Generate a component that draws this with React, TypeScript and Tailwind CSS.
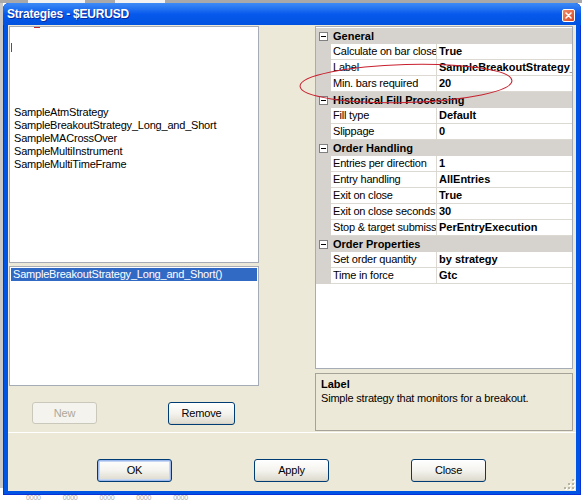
import React from "react";

type Row = [string, string];
type Section = { title: string; rows: Row[] };

const sections: Section[] = [
  {
    title: "General",
    rows: [
      ["Calculate on bar close", "True"],
      ["Label", "SampleBreakoutStrategy_Long_and_Short"],
      ["Min. bars required", "20"],
    ],
  },
  {
    title: "Historical Fill Processing",
    rows: [
      ["Fill type", "Default"],
      ["Slippage", "0"],
    ],
  },
  {
    title: "Order Handling",
    rows: [
      ["Entries per direction", "1"],
      ["Entry handling", "AllEntries"],
      ["Exit on close", "True"],
      ["Exit on close seconds", "30"],
      ["Stop & target submission", "PerEntryExecution"],
    ],
  },
  {
    title: "Order Properties",
    rows: [
      ["Set order quantity", "by strategy"],
      ["Time in force", "Gtc"],
    ],
  },
];

const strategies = [
  "SampleAtmStrategy",
  "SampleBreakoutStrategy_Long_and_Short",
  "SampleMACrossOver",
  "SampleMultiInstrument",
  "SampleMultiTimeFrame",
];

const MinusBox = () => (
  <div className="w-[9px] h-[9px] border border-[#808080] bg-white flex items-center justify-center">
    <div className="w-[5px] h-px bg-black" />
  </div>
);

const XpButton = ({ label, w, disabled, isDefault }: { label: string; w: string; disabled?: boolean; isDefault?: boolean }) => {
  if (disabled) {
    return (
      <div className={`${w} h-[22px] rounded-[3px] border border-[#CAC8BB] bg-[#F4F3EE] flex items-center justify-center text-[#ACA899]`}>
        {label}
      </div>
    );
  }
  return (
    <div className={`${w} h-[23px] rounded-[3px] border border-[#003C74] bg-linear-to-b from-white via-[#F4F3EE] to-[#DCD9CC] flex items-center justify-center text-black ${isDefault ? "shadow-[inset_0_0_0_1px_#9DB9EB,inset_0_0_0_2px_#C6D6F3]" : "shadow-[inset_0_-1px_0_#D6D0C5]"}`}>
      {label}
    </div>
  );
};

export default function App() {
  return (
    <div className="relative w-[582px] h-[500px] overflow-hidden bg-white font-['Liberation_Sans',Arial,sans-serif] text-[11px] tracking-[-0.2px] text-black">
      {/* desktop behind */}
      <div className="h-[3px] bg-[#A9A9A9] flex">
        <div className="ml-[28px] w-[57px] bg-[#F2F2F2]" />
        <div className="ml-[30px] w-[50px] bg-[#F2F2F2]" />
      </div>
      <div className="absolute left-0 top-[3px] w-[3px] h-[485px] bg-[#C8C8C8]" />
      <div className="absolute left-0 top-[496px] flex gap-[22px] pl-[26px] text-[7px] leading-[4px] text-[#A8A8A8]">
        <span>0000</span>
        <span>0000</span>
        <span>0000</span>
        <span>0000</span>
        <span>0000</span>
      </div>

      {/* window */}
      <div className="absolute left-[3px] top-[3px] w-[578px] h-[492px] rounded-t-[6px] bg-[#0054E3] shadow-[inset_0_0_0_1px_#0831D9]">
        <div className="h-[22px] rounded-t-[6px] bg-linear-to-b from-[#3D8BF6] via-[#0659EC] to-[#0152DF] flex items-center justify-between pl-[4px] pr-[6px]">
          <span className="text-white font-bold text-[12px] tracking-[-0.2px] [text-shadow:1px_1px_#0A2A9C]">Strategies - $EURUSD</span>
          <div className="mt-[2px] w-[13px] h-[13px] rounded-[2px] border border-white bg-linear-to-br from-[#F08A66] to-[#D9451E] flex items-center justify-center">
            <svg width="7" height="7" viewBox="0 0 7 7">
              <path d="M1 1 L6 6 M6 1 L1 6" stroke="white" strokeWidth="1.6" strokeLinecap="round" />
            </svg>
          </div>
        </div>

        <div className="ml-[5px] w-[568px] h-[466px] bg-[#ECE9D8] relative">
          <div className="h-[407px] flex">
            {/* left column */}
            <div className="ml-[1px] w-[250px] flex flex-col">
              <div className="relative h-[237px] mt-[1px] border border-[#A5ACB5] bg-white pt-[79px] pl-[4px] leading-[13px]">
                <span className="absolute left-[24px] top-0 w-[6px] h-px bg-[#C0262C]" />
                <span className="absolute left-[1px] top-[16px] w-px h-[9px] bg-[#C0262C]" />
                {strategies.map((s) => (
                  <div key={s} className="whitespace-nowrap">{s}</div>
                ))}
              </div>
              <div className="h-[120px] mt-[3px] border border-[#A5ACB5] bg-white px-[1px] pt-px">
                <div className="h-[13px] leading-[13px] bg-[#316AC5] text-white pl-[2px] whitespace-nowrap">
                  SampleBreakoutStrategy_Long_and_Short()
                </div>
              </div>
              <div className="mt-[16px] flex">
                <div className="ml-[23px]">
                  <XpButton label="New" w="w-[65px]" disabled />
                </div>
                <div className="ml-[71px]">
                  <XpButton label="Remove" w="w-[67px]" />
                </div>
              </div>
            </div>

            {/* right column */}
            <div className="ml-[56px] w-[258px] flex flex-col">
              <div className="h-[343px] mt-[1px] border border-[#A5ACB5] bg-white pt-px">
                {sections.map((sec) => (
                  <div key={sec.title}>
                    <div className="h-[16px] bg-[#D6D3CE] flex items-center">
                      <div className="ml-[3px]">
                        <MinusBox />
                      </div>
                      <span className="ml-[5px] font-bold tracking-[0px] leading-[16px] whitespace-nowrap">{sec.title}</span>
                    </div>
                    {sec.rows.map(([name, value]) => (
                      <div key={name} className="h-[16px] flex">
                        <div className="w-[15px] bg-[#D6D3CE]" />
                        <div className="w-[105px] border-b border-[#DCD9D2] pl-[2px] leading-[15px] whitespace-nowrap overflow-hidden">
                          {name}
                        </div>
                        <div className="w-px bg-[#DCD9D2]" />
                        <div className="flex-1 border-b border-[#DCD9D2] pl-[2px] leading-[15px] font-bold tracking-[0px] whitespace-nowrap overflow-hidden">
                          {value}
                        </div>
                      </div>
                    ))}
                  </div>
                ))}
              </div>
              <div className="h-[58px] mt-[4px] border border-[#A5A398] bg-[#ECE9D8] pl-[5px] pt-[3px]">
                <div className="font-bold tracking-[0px] leading-[14px]">Label</div>
                <div className="leading-[14px]">Simple strategy that monitors for a breakout.</div>
              </div>
            </div>
          </div>

          <div className="h-px bg-white" />

          <div className="mt-[26px] flex">
            <div className="ml-[89px]">
              <XpButton label="OK" w="w-[75px]" isDefault />
            </div>
            <div className="ml-[82px]">
              <XpButton label="Apply" w="w-[75px]" />
            </div>
            <div className="ml-[82px]">
              <XpButton label="Close" w="w-[75px]" />
            </div>
          </div>

          {/* resize grip */}
          <svg className="absolute right-[1px] bottom-[1px]" width="11" height="11" viewBox="0 0 11 11">
            {[
              [8, 0], [8, 4], [4, 4], [8, 8], [4, 8], [0, 8],
            ].map(([x, y]) => (
              <g key={`${x}-${y}`}>
                <rect x={x + 1} y={y + 1} width="2" height="2" fill="#FFFFFF" />
                <rect x={x} y={y} width="2" height="2" fill="#B8B4A2" />
              </g>
            ))}
          </svg>
        </div>
      </div>

      {/* hand-drawn red ellipse */}
      <svg className="absolute left-[296px] top-[61px] pointer-events-none" width="222" height="46" viewBox="0 0 222 46">
        <ellipse cx="110" cy="22.5" rx="106" ry="19" fill="none" stroke="#C8202E" strokeWidth="1" transform="rotate(-1.5 110 22.5)" />
      </svg>
    </div>
  );
}
